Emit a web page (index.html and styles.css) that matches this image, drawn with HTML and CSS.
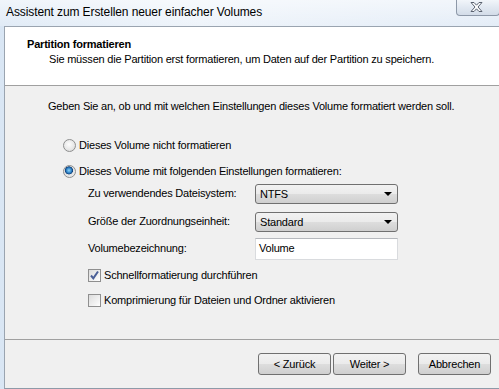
FILE: index.html
```html
<!DOCTYPE html>
<html lang="de">
<head>
  <meta charset="UTF-8">
  <title>Assistent zum Erstellen neuer einfacher Volumes</title>
  <link rel="stylesheet" href="styles.css">
</head>
<body>

  <div class="window">
    <!-- Title bar -->
    <div class="titlebar">
      <span class="title">Assistent zum Erstellen neuer einfacher Volumes</span>
      <div class="close-button">
        <svg width="15" height="12" viewBox="0 0 15 12">
          <path d="M2 1.5h3l2.5 2.7 2.5-2.7h3l-4 4.5 4 4.5h-3l-2.5-2.7-2.5 2.7h-3l4-4.5z" fill="#fff" stroke="#5a6270" stroke-width="1" stroke-linejoin="round"/>
        </svg>
      </div>
    </div>

    <div class="client">
      <!-- Header -->
      <div class="header">
        <div class="header-title">Partition formatieren</div>
        <div class="header-sub">Sie müssen die Partition erst formatieren, um Daten auf der Partition zu speichern.</div>
      </div>

      <!-- Content -->
      <div class="content">
        <p class="intro">Geben Sie an, ob und mit welchen Einstellungen dieses Volume formatiert werden soll.</p>

        <label class="radio-row first">
          <span class="radio"></span>
          Dieses Volume nicht formatieren
        </label>
        <label class="radio-row">
          <span class="radio checked"></span>
          Dieses Volume mit folgenden Einstellungen formatieren:
        </label>

        <div class="fields">
          <span class="field-label">Zu verwendendes Dateisystem:</span>
          <div class="combo">NTFS<span class="arrow"></span></div>

          <span class="field-label second">Größe der Zuordnungseinheit:</span>
          <div class="combo second">Standard<span class="arrow"></span></div>

          <span class="field-label third">Volumebezeichnung:</span>
          <div class="textbox third">Volume</div>
        </div>

        <label class="check-row first">
          <span class="checkbox checked">
            <svg width="11" height="11" viewBox="0 0 11 11">
              <path d="M2 5.5l2.3 2.8L9 1.5" fill="none" stroke="#4a5f97" stroke-width="2"/>
            </svg>
          </span>
          Schnellformatierung durchführen
        </label>
        <label class="check-row">
          <span class="checkbox"></span>
          Komprimierung für Dateien und Ordner aktivieren
        </label>
      </div>

      <!-- Footer buttons -->
      <div class="footer">
        <button class="btn">&lt; Zurück</button>
        <button class="btn">Weiter &gt;</button>
        <button class="btn cancel">Abbrechen</button>
      </div>
    </div>
  </div>

</body>
</html>
```

FILE: styles.css
```css
/* General styling */
body {
  margin: 0;
  width: 499px;
  height: 389px;
  overflow: hidden;
  font-family: "Liberation Sans", Arial, sans-serif;
  font-size: 11px;
  letter-spacing: -0.2px;
  color: #000;
  background: linear-gradient(90deg, #d9e6f4 0%, #eaf1f9 40%, #dde8f5 100%);
}

.window {
  width: 540px;
  height: 389px;
  display: flex;
  flex-direction: column;
}

/* Title bar */
.titlebar {
  height: 26px;
  display: flex;
  align-items: flex-start;
  position: relative;
  background: linear-gradient(180deg, rgba(255, 255, 255, 0.6), rgba(255, 255, 255, 0.2));
}

.title {
  margin: 4px 0 0 6px;
  font-size: 12px;
  letter-spacing: -0.1px;
  line-height: 16px;
  color: #000;
}

.close-button {
  position: absolute;
  top: -1px;
  left: 456px;
  width: 44px;
  height: 17px;
  border: 1px solid #8d98a8;
  border-top: none;
  border-radius: 0 0 4px 4px;
  background: linear-gradient(180deg, #f4f7fb 0%, #e2e9f2 50%, #d3dce8 100%);
  display: flex;
  align-items: center;
  justify-content: center;
  box-sizing: border-box;
  padding-right: 4px;
}

/* Client area */
.client {
  margin-left: 4px;
  height: 362px;
  border-top: 1px solid #9aa4b0;
  border-left: 1px solid #9aa4b0;
  border-bottom: 1px solid #8e9aa8;
  background: #f0f0f0;
  display: flex;
  flex-direction: column;
}

/* Header */
.header {
  height: 59px;
  background: #fff;
  border-bottom: 1px solid #a0a0a0;
  box-sizing: border-box;
  padding: 10px 0 0 22px;
}

.header-title {
  font-weight: bold;
  line-height: 15px;
}

.header-sub {
  margin-left: 22px;
  line-height: 15px;
}

/* Content */
.content {
  height: 254px;
  box-sizing: border-box;
  padding: 13px 0 0 43px;
  border-bottom: 1px solid #a0a0a0;
}

.intro {
  margin: 0;
  line-height: 15px;
}

.radio-row {
  display: flex;
  align-items: center;
  gap: 3px;
  margin: 11px 0 0 15px;
  line-height: 15px;
}

.radio-row.first {
  margin-top: 24px;
}

.radio {
  width: 13px;
  height: 13px;
  box-sizing: border-box;
  border: 1px solid #8e8f8f;
  border-radius: 50%;
  background: radial-gradient(circle at 45% 40%, #fdfdfd 0%, #e6e6e6 60%, #cfcfcf 100%);
}

.radio.checked {
  background:
    radial-gradient(circle at 45% 40%, #8fd8ff 0%, #2a7cc0 30%, #0e3f7a 42%, #e2e2e2 48%, #f4f4f4 100%);
}

/* Settings grid */
.fields {
  display: grid;
  grid-template-columns: 167px 143px;
  align-items: center;
  margin: 5px 0 0 40px;
}

.field-label {
  line-height: 15px;
}

.field-label.second,
.combo.second {
  margin-top: 8px;
}

.field-label.third,
.textbox.third {
  margin-top: 6px;
}

.combo {
  height: 20px;
  box-sizing: border-box;
  border: 1px solid #707070;
  border-radius: 3px;
  background: linear-gradient(180deg, #f2f2f2 0%, #ebebeb 48%, #dddddd 52%, #cfcfcf 100%);
  padding-left: 4px;
  line-height: 18px;
  position: relative;
}

.arrow {
  position: absolute;
  right: 5px;
  top: 7px;
  border-left: 4px solid transparent;
  border-right: 4px solid transparent;
  border-top: 4px solid #000;
}

.textbox {
  height: 22px;
  box-sizing: border-box;
  border: 1px solid #d9dbde;
  border-top-color: #b5b8bd;
  background: #fff;
  padding-left: 3px;
  line-height: 19px;
}

/* Checkboxes */
.check-row {
  display: flex;
  align-items: center;
  gap: 3px;
  margin: 10px 0 0 40px;
  line-height: 15px;
}

.check-row.first {
  margin-top: 8px;
}

.checkbox {
  width: 13px;
  height: 13px;
  box-sizing: border-box;
  border: 1px solid #8f8f8f;
  background: linear-gradient(135deg, #dcdcdc 0%, #f4f4f4 70%, #ffffff 100%);
  display: flex;
  align-items: center;
  justify-content: center;
}

/* Footer */
.footer {
  display: flex;
  padding: 13px 0 0 253px;
  gap: 2px;
}

.btn {
  width: 73px;
  height: 22px;
  border: 1px solid #707070;
  border-radius: 3px;
  background: linear-gradient(180deg, #f2f2f2 0%, #ebebeb 48%, #dddddd 52%, #cfcfcf 100%);
  font-family: "Liberation Sans", Arial, sans-serif;
  font-size: 11px;
  letter-spacing: -0.2px;
  color: #000;
  padding: 0;
}

.btn.cancel {
  margin-left: 10px;
}
```
